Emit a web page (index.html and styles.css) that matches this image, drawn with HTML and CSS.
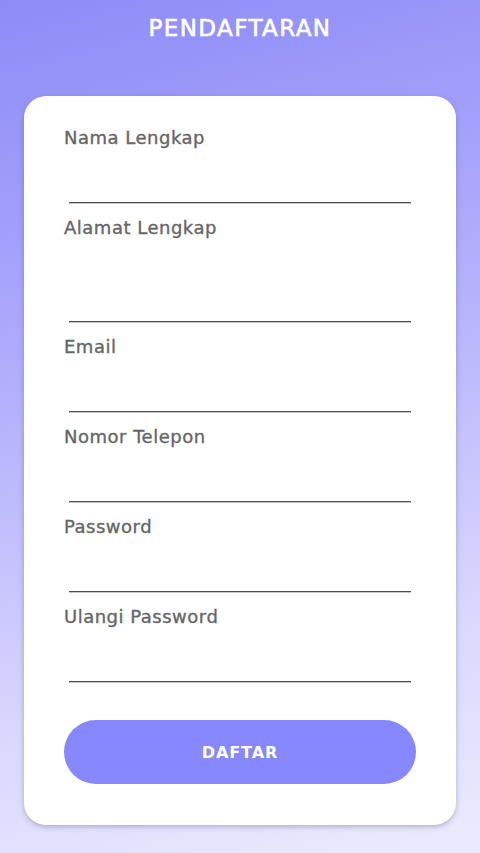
FILE: index.html
```html
<!DOCTYPE html>
<html lang="id">
<head>
<meta charset="utf-8">
<title>Pendaftaran</title>
<link rel="stylesheet" href="styles.css">
</head>
<body>
<div class="screen">
  <h1 class="title">PENDAFTARAN</h1>
  <form class="card">
    <div class="field">
      <label class="label">Nama Lengkap</label>
      <div class="input"></div>
    </div>
    <div class="field">
      <label class="label">Alamat Lengkap</label>
      <div class="input tall"></div>
    </div>
    <div class="field">
      <label class="label">Email</label>
      <div class="input"></div>
    </div>
    <div class="field">
      <label class="label">Nomor Telepon</label>
      <div class="input"></div>
    </div>
    <div class="field">
      <label class="label">Password</label>
      <div class="input"></div>
    </div>
    <div class="field">
      <label class="label">Ulangi Password</label>
      <div class="input"></div>
    </div>
    <button type="button" class="button">DAFTAR</button>
  </form>
</div>
</body>
</html>
```

FILE: styles.css
```css
* { box-sizing: border-box; }
html, body { margin: 0; padding: 0; }
body {
  width: 480px;
  height: 853px;
  overflow: hidden;
  font-family: "DejaVu Sans", "Open Sans", sans-serif;
}
.screen {
  width: 480px;
  height: 853px;
  background: linear-gradient(165deg, #8e8bf6 0%, #a3a0fb 25%, #bdbafc 50%, #d9d7fd 75%, #ecebfd 100%);
  padding: 13px 24px 0;
  display: flex;
  flex-direction: column;
}
.title {
  margin: 0;
  text-align: center;
  color: #ffffff;
  font-size: 23px;
  line-height: 30px;
  font-weight: 500;
  letter-spacing: 1.4px;
  -webkit-text-stroke: 0.6px #ffffff;
}
.card {
  margin-top: 53px;
  background: #ffffff;
  border-radius: 22px;
  height: 729px;
  padding: 30px 40px 0;
  box-shadow: 0 2px 5px rgba(80, 80, 120, 0.35);
  display: flex;
  flex-direction: column;
}
.field {
  display: flex;
  flex-direction: column;
  margin-bottom: 13px;
}
.label {
  font-size: 18px;
  line-height: 24px;
  color: #666666;
  letter-spacing: 0.5px;
  -webkit-text-stroke: 0.35px #666666;
}
.input {
  height: 53px;
  margin: 0 5px;
  border-bottom: 1px solid #4f4f4f;
  box-shadow: 0 1px 0 rgba(90, 90, 90, 0.35);
}
.input.tall {
  height: 82px;
}
.button {
  margin-top: 25px;
  height: 64px;
  border: none;
  border-radius: 32px;
  background: #8788fc;
  color: #ffffff;
  font-family: "DejaVu Sans", sans-serif;
  font-weight: 700;
  font-size: 16px;
  letter-spacing: 0.9px;
}
```
